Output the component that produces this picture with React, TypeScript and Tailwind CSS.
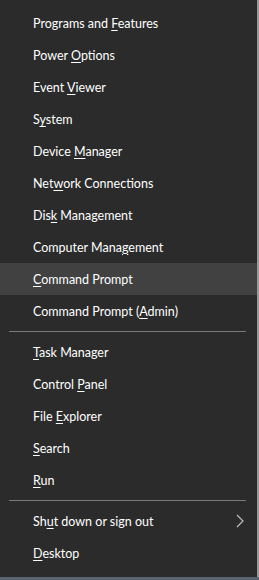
import React from "react";

type Item = { pre: string; key: string; post: string; active?: boolean; arrow?: boolean };

const groups: Item[][] = [
  [
    { pre: "Programs and ", key: "F", post: "eatures" },
    { pre: "Power ", key: "O", post: "ptions" },
    { pre: "Event ", key: "V", post: "iewer" },
    { pre: "S", key: "y", post: "stem" },
    { pre: "Device ", key: "M", post: "anager" },
    { pre: "Net", key: "w", post: "ork Connections" },
    { pre: "Dis", key: "k", post: " Management" },
    { pre: "Computer Mana", key: "g", post: "ement" },
    { pre: "", key: "C", post: "ommand Prompt", active: true },
    { pre: "Command Prompt (", key: "A", post: "dmin)" },
  ],
  [
    { pre: "", key: "T", post: "ask Manager" },
    { pre: "Control ", key: "P", post: "anel" },
    { pre: "File ", key: "E", post: "xplorer" },
    { pre: "", key: "S", post: "earch" },
    { pre: "", key: "R", post: "un" },
  ],
  [
    { pre: "Sh", key: "u", post: "t down or sign out", arrow: true },
    { pre: "", key: "D", post: "esktop" },
  ],
];

function Row({ item }: { item: Item }) {
  return (
    <div
      className={`flex items-center h-8 pl-[33px] pr-3 ${item.active ? "bg-[#414141]" : ""}`}
    >
      <span className="flex-1 mt-[2px] text-[12.5px] text-white leading-none">
        {item.pre}
        <u className="underline-offset-2">{item.key}</u>
        {item.post}
      </span>
      {item.arrow && (
        <svg width="8" height="14" viewBox="0 0 8 14" className="mr-[1px]">
          <polyline points="1,1 7,7 1,13" fill="none" stroke="#bdbdbd" strokeWidth="1.2" />
        </svg>
      )}
    </div>
  );
}

export default function App() {
  return (
    <div className="w-[259px] h-[580px] bg-[#5a6470] font-['Lato',sans-serif]">
      <div className="w-[259px] h-[577px] bg-[#2b2b2b] border-r-2 border-r-[#9a9a9a] pt-[7px]">
        {groups.map((g, gi) => (
          <div key={gi}>
            {gi > 0 && (
              <div className="py-[4px] pl-[9px] pr-[11px]">
                <div className="h-px bg-[#7a7a7a]" />
              </div>
            )}
            {g.map((it, i) => (
              <Row key={i} item={it} />
            ))}
          </div>
        ))}
      </div>
    </div>
  );
}
